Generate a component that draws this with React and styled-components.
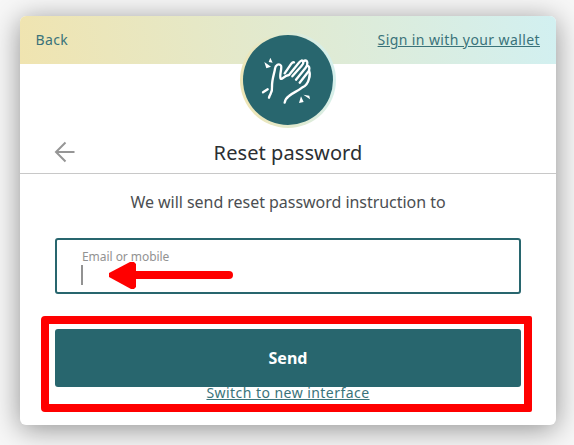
import React from "react";
import styled, { createGlobalStyle } from "styled-components";

const GlobalStyle = createGlobalStyle`
  * { box-sizing: border-box; }
  body { margin: 0; background: #f7f7f7; font-family: "Noto Sans", "Open Sans", sans-serif; }
`;

const Page = styled.main`
  width: 574px;
  height: 445px;
  padding: 16px 18px 20px 20px;
  overflow: hidden;
`;

const Card = styled.section`
  position: relative;
  height: 409px;
  border-radius: 6px;
  background: #fff;
  box-shadow: 0 4px 28px rgba(0, 0, 0, 0.42);
`;

const TopBar = styled.header`
  display: flex;
  justify-content: space-between;
  height: 48px;
  padding: 0 16px 0 15.5px;
  line-height: 48px;
  border-radius: 6px 6px 0 0;
  background: linear-gradient(79deg, #f0e4b0, #d2f0f1);
`;

const TextLink = styled.a`
  color: #3a737a;
  font-size: 14px;
  letter-spacing: ${(p) => p.$spacing || "0.4px"};
  text-decoration: ${(p) => (p.$underlined ? "underline" : "none")};
`;

const Logo = styled.div`
  position: absolute;
  left: 220px;
  top: 16px;
  width: 96px;
  height: 96px;
  padding: 3px;
  border-radius: 50%;
  background: linear-gradient(79deg, #f0e4b0, #d2f0f1);
`;

const LogoDisc = styled.div`
  width: 90px;
  height: 90px;
  border-radius: 50%;
  background: #28666e;
  svg { display: block; }
`;

const TitleRow = styled.div`
  display: grid;
  grid-template-columns: 90px 1fr 90px;
  align-items: center;
  height: 110px;
  padding-top: 67px;
  border-bottom: 1px solid #c8c8c8;
`;

const BackButton = styled.button`
  display: flex;
  padding: 0 0 0 34px;
  border: 0;
  background: none;
`;

const Title = styled.h1`
  margin: 0;
  padding-top: 2px;
  text-align: center;
  font-size: 20px;
  font-weight: 400;
  line-height: 28px;
  letter-spacing: 0.08px;
  color: #2b2f33;
`;

const Form = styled.form`
  display: flex;
  flex-direction: column;
  align-items: center;
  padding: 16px 35px 0;
`;

const Hint = styled.p`
  margin: 0;
  font-size: 16px;
  line-height: 24px;
  letter-spacing: -0.04px;
  color: #4b4e51;
`;

const Field = styled.label`
  width: 100%;
  height: 56px;
  margin-top: 24px;
  padding: 9px 25px;
  border: 2px solid #28666e;
  border-radius: 3px;
  font-size: 12px;
  line-height: 16px;
  letter-spacing: -0.05px;
  color: #929292;
`;

const Caret = styled.span`
  display: block;
  width: 2px;
  height: 20px;
  margin-left: -1px;
  background: #929292;
`;

const Submit = styled.button`
  width: 100%;
  height: 58px;
  margin-top: 35px;
  border: 0;
  border-radius: 3px;
  background: #28666e;
  color: #fff;
  font: 700 16px/24px "Noto Sans", sans-serif;
`;

const Switch = styled.div`
  display: flex;
  line-height: 12px;
`;

const Highlight = styled.div`
  position: absolute;
  left: 21px;
  top: 300px;
  width: 491px;
  height: 96px;
  border: 8px solid #f00;
  border-radius: 4px 2px 2px 4px;
  pointer-events: none;
`;

const Pointer = styled.svg`
  position: absolute;
  left: 88px;
  top: 245px;
`;

const ClapIcon = () => (
  <svg width="90" height="90" viewBox="39 15 270 270" fill="none" stroke="#fff" strokeWidth="7" strokeLinecap="round" strokeLinejoin="round">
    <path d="M117 203C120 191 128 188 126 171C125 148 134 128 135 116C136 105 147 99 153 107C157 113 147 137 152 146C157 151 161 136 177 135L206 99Q216 86 220 96Q221 102 215 107L187 139" />
    <path d="M164 130L184 101Q188 96 192 97" />
    <path d="M219 95Q229 87 232 97Q233 106 227 113L198 149" />
    <path d="M231 107Q241 109 237 122L209 158" />
    <path d="M237 122Q242 132 237 146C234 159 227 168 217 172C203 184 190 187 177 198Q166 206 164 218" />
    <path d="M99 187L113 178" />
    <g fill="#fff" stroke="none">
      <path d="M121 83L128 98L116 96ZM103 96L123 110L109 115ZM220 194L238 197L240 208ZM213 199L221 216L207 219Z" />
    </g>
  </svg>
);

export default function App() {
  return (
    <>
      <GlobalStyle />
      <Page>
        <Card>
          <TopBar>
            <TextLink>Back</TextLink>
            <TextLink $underlined>Sign in with your wallet</TextLink>
          </TopBar>
          <Logo><LogoDisc><ClapIcon /></LogoDisc></Logo>
          <TitleRow>
            <BackButton type="button" aria-label="Go back">
              <svg width="22" height="22" viewBox="0 0 22 22" fill="none" stroke="#969696" strokeWidth="2">
                <path d="M20.5 11H2M11.5 1.5L2 11L11.5 20.5" />
              </svg>
            </BackButton>
            <Title>Reset password</Title>
          </TitleRow>
          <Form>
            <Hint>We will send reset password instruction to</Hint>
            <Field>Email or mobile<Caret /></Field>
            <Submit type="button">Send</Submit>
            <Switch><TextLink $underlined $spacing="0.45px">Switch to new interface</TextLink></Switch>
          </Form>
          <Highlight />
          <Pointer width="127" height="30" viewBox="0 0 127 30">
            <path d="M1 12L22 1H26L28 3V26L26 28H23L1 16Z" fill="#f00" />
            <path d="M20 14H121" stroke="#f00" strokeWidth="8" strokeLinecap="round" />
          </Pointer>
        </Card>
      </Page>
    </>
  );
}
